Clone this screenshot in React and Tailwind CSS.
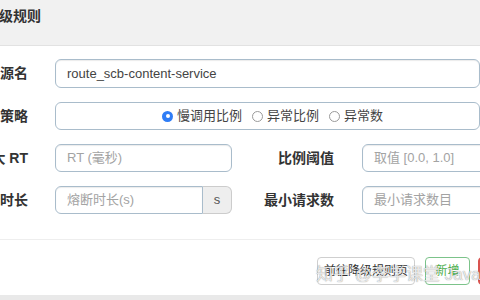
import React from 'react';

const font = "font-['Liberation_Sans','Noto_Sans_CJK_SC',sans-serif]";

function Label({ children, width = 'w-[28px]' }) {
  return (
    <div className={`${width} shrink-0 flex justify-end whitespace-nowrap text-[14px] font-bold text-[#333]`}>
      {children}
    </div>
  );
}

function Input({ value, placeholder, className = '' }) {
  return (
    <div
      className={`h-full flex items-center rounded-[6px] border border-[#a9bccb] bg-white px-[11px] text-[13px] shadow-[inset_0_1px_1px_rgba(0,0,0,0.08)] ${className}`}
    >
      {value ? (
        <span className="text-[#444]">{value}</span>
      ) : (
        <span className="text-[#a3a3a3]">{placeholder}</span>
      )}
    </div>
  );
}

function Radio({ checked, label }) {
  return (
    <label className="flex items-center gap-[4px] text-[13px] text-[#444]">
      {checked ? (
        <span className="w-[11px] h-[11px] rounded-full bg-[#2f7df6] flex items-center justify-center">
          <span className="w-[4px] h-[4px] rounded-full bg-white" />
        </span>
      ) : (
        <span className="w-[11px] h-[11px] rounded-full border border-[#9a9a9a] bg-white" />
      )}
      {label}
    </label>
  );
}

export default function App() {
  return (
    <div className={`w-[480px] h-[300px] overflow-hidden bg-[#e9e9e9] relative ${font}`}>
      {/* Header */}
      <div className="h-[46px] bg-[#f1f1f1] border-b border-[#e2e2e2] pt-[7px]">
        <h3 className="ml-[-43px] whitespace-nowrap text-[14px] font-bold text-[#333] leading-[18px]">
          新增降级规则
        </h3>
      </div>

      {/* Form */}
      <div className="h-[194px] bg-white border-b border-[#eeeeee] pt-[13px] flex flex-col gap-[14px]">
        <div className="flex items-center h-[29px]">
          <Label>资源名</Label>
          <div className="ml-[27px] w-[600px] h-full">
            <Input value="route_scb-content-service" />
          </div>
        </div>

        <div className="flex items-center h-[28px]">
          <Label>降级策略</Label>
          <div className="ml-[27px] w-[600px] h-full rounded-[6px] border border-[#a9bccb] flex items-center pl-[106px] gap-[10px]">
            <Radio checked label="慢调用比例" />
            <Radio label="异常比例" />
            <Radio label="异常数" />
          </div>
        </div>

        <div className="flex items-center h-[28px]">
          <Label>最大 RT</Label>
          <div className="ml-[27px] w-[177px] h-full shrink-0">
            <Input placeholder="RT (毫秒)" />
          </div>
          <Label width="w-[102px]">比例阈值</Label>
          <div className="ml-[28px] w-[200px] h-full shrink-0">
            <Input placeholder="取值 [0.0, 1.0]" />
          </div>
        </div>

        <div className="flex items-center h-[28px]">
          <Label>熔断时长</Label>
          <div className="ml-[27px] w-[177px] h-full shrink-0 flex">
            <Input placeholder="熔断时长(s)" className="flex-1 rounded-r-none" />
            <div className="w-[29px] h-full flex items-center justify-center bg-[#eeeeee] border border-l-0 border-[#cccccc] rounded-r-[6px] text-[13px] text-[#555]">
              s
            </div>
          </div>
          <Label width="w-[102px]">最小请求数</Label>
          <div className="ml-[28px] w-[200px] h-full shrink-0">
            <Input placeholder="最小请求数目" />
          </div>
        </div>
      </div>

      {/* Footer */}
      <div className="h-[55px] bg-white pt-[17px] pl-[317px] flex items-start whitespace-nowrap">
        <button className="w-[98px] h-[28px] shrink-0 rounded-[4px] border border-[#cfcfcf] bg-white text-[12px] text-[#333]">
          前往降级规则页
        </button>
        <button className="ml-[10px] w-[45px] h-[28px] shrink-0 rounded-[4px] border border-[#7cc38a] bg-white text-[12px] text-[#4cae4c]">
          新增
        </button>
        <button className="ml-[8px] w-[45px] h-[28px] shrink-0 rounded-[4px] border border-[#d9534f] bg-[#d9534f] text-[12px] text-white">
          取消
        </button>
      </div>

      {/* Watermark */}
      <div className="absolute left-[316px] top-[262px] whitespace-nowrap text-[17px] text-white/80 [text-shadow:0_0_1px_rgba(0,0,0,0.55)] pointer-events-none">
        知乎 @李学课堂 Java
      </div>
    </div>
  );
}
